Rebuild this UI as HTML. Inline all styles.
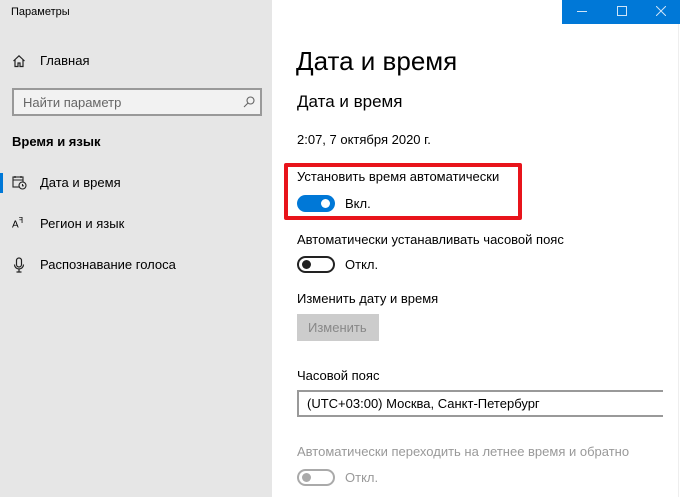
<!DOCTYPE html>
<html><head><meta charset="utf-8"><style>
*{margin:0;padding:0;box-sizing:border-box}
body{width:680px;height:497px;overflow:hidden;background:#fff;font-family:"Liberation Sans","DejaVu Sans",sans-serif;color:#000;position:relative}
.a{position:absolute;white-space:nowrap}
#side{position:absolute;left:0;top:0;width:272px;height:497px;background:#e6e6e6}
.t13{font-size:13px}
</style></head><body>
<div id="side"></div>
<div class="a" style="left:11px;top:6px;font-size:11px">Параметры</div>
<svg class="a" style="left:12px;top:54px" width="14" height="14" viewBox="0 0 14 14" fill="none" stroke="#222" stroke-width="1.2"><path d="M1.5 7 7 1.8 12.5 7M3 5.8V12.5h3V9h2v3.5h3V5.8"/></svg>
<div class="a t13" style="left:40px;top:53px">Главная</div>
<div class="a" style="left:12px;top:88px;width:250px;height:28px;border:2px solid #999;background:#f2f2f2"></div>
<div class="a t13" style="left:23px;top:95px;color:#666">Найти параметр</div>
<svg class="a" style="left:242px;top:95px" width="14" height="14" viewBox="0 0 14 14" fill="none" stroke="#666" stroke-width="1.1"><circle cx="8.5" cy="5.5" r="3.5"/><path d="M6 8 2 12"/></svg>
<div class="a t13" style="left:12px;top:134px;font-weight:bold">Время и язык</div>
<div class="a" style="left:0;top:173px;width:3px;height:20px;background:#0078d7"></div>
<svg class="a" style="left:12px;top:175px" width="15" height="15" viewBox="0 0 15 15" fill="none" stroke="#222" stroke-width="1.1"><rect x="1" y="2" width="10" height="10"/><path d="M1 5h10M3 1v2M9 1v2"/><circle cx="10.5" cy="10.5" r="3.5" fill="#e6e6e6"/><path d="M10.5 9v1.8h1.3"/></svg>
<div class="a t13" style="left:40px;top:175px">Дата и время</div>
<div class="a" style="left:12px;top:216px;font-size:10px">A<sup style="font-size:8px">ꟻ</sup></div>
<div class="a t13" style="left:40px;top:216px">Регион и язык</div>
<svg class="a" style="left:13px;top:257px" width="12" height="16" viewBox="0 0 12 16" fill="none" stroke="#222" stroke-width="1.2"><rect x="3.5" y="1" width="5" height="9" rx="2.5"/><path d="M1.5 7.5a4.5 4.5 0 0 0 9 0M6 12v3M3.5 15h5"/></svg>
<div class="a t13" style="left:40px;top:257px">Распознавание голоса</div>

<div class="a" style="left:562px;top:0;width:118px;height:24px;background:#0078d7"></div>
<div class="a" style="left:577px;top:11px;width:10px;height:1px;background:#cfe4f7"></div>
<div class="a" style="left:617px;top:6px;width:10px;height:10px;border:1px solid #cfe4f7"></div>
<svg class="a" style="left:656px;top:6px" width="10" height="10" viewBox="0 0 10 10" stroke="#cfe4f7" stroke-width="1"><path d="M0 0 10 10M10 0 0 10"/></svg>
<div class="a" style="left:678px;top:24px;width:1px;height:473px;background:#eee"></div>

<div class="a" style="left:296px;top:46px;font-size:26px">Дата и время</div>
<div class="a" style="left:297px;top:92px;font-size:17px">Дата и время</div>
<div class="a t13" style="left:297px;top:132px">2:07, 7 октября 2020 г.</div>
<div class="a" style="left:284px;top:163px;width:238px;height:57px;border:4px solid #e8141b;border-radius:2px"></div>
<div class="a t13" style="left:297px;top:169px">Установить время автоматически</div>
<div class="a" style="left:297px;top:195px;width:38px;height:17px;border-radius:9px;background:#0078d7"></div>
<div class="a" style="left:321px;top:199px;width:9px;height:9px;border-radius:50%;background:#fff"></div>
<div class="a t13" style="left:345px;top:196px">Вкл.</div>
<div class="a t13" style="left:297px;top:232px">Автоматически устанавливать часовой пояс</div>
<div class="a" style="left:297px;top:256px;width:38px;height:17px;border-radius:9px;border:2px solid #222"></div>
<div class="a" style="left:302px;top:260px;width:9px;height:9px;border-radius:50%;background:#222"></div>
<div class="a t13" style="left:345px;top:257px">Откл.</div>
<div class="a t13" style="left:297px;top:291px">Изменить дату и время</div>
<div class="a" style="left:297px;top:314px;width:82px;height:27px;background:#ccc"></div>
<div class="a t13" style="left:308px;top:320px;color:#888">Изменить</div>
<div class="a t13" style="left:297px;top:368px">Часовой пояс</div>
<div class="a" style="left:297px;top:390px;width:366px;height:27px;border:2px solid #999;border-right:none"></div>
<div class="a t13" style="left:307px;top:396px">(UTC+03:00) Москва, Санкт-Петербург</div>
<div class="a t13" style="left:297px;top:444px;color:#999">Автоматически переходить на летнее время и обратно</div>
<div class="a" style="left:297px;top:469px;width:38px;height:17px;border-radius:9px;border:2px solid #aaa"></div>
<div class="a" style="left:302px;top:473px;width:9px;height:9px;border-radius:50%;background:#aaa"></div>
<div class="a t13" style="left:345px;top:470px;color:#999">Откл.</div>
</body></html>
